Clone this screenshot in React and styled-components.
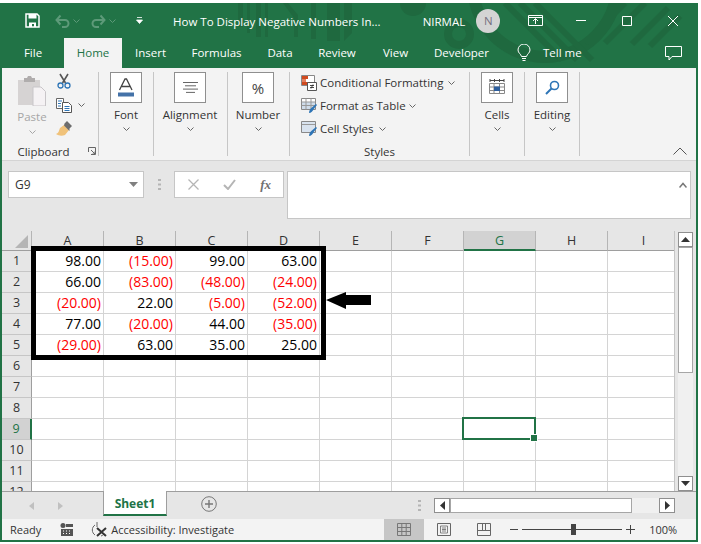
import React from 'react';
import styled, { createGlobalStyle } from 'styled-components';

const GREEN = '#217346';

const GlobalStyle = createGlobalStyle`
  html, body {
    margin: 0;
    padding: 0;
    background: #fff;
    overflow: hidden;
  }
  * { box-sizing: border-box; }
`;

const Page = styled.div`
  width: 701px;
  height: 544px;
  padding-top: 3px;
  background: #fff;
  font-family: "Open Sans", "Noto Sans", sans-serif;
  font-size: 12px;
  color: #333;
`;

const Window = styled.div`
  width: 698px;
  height: 539px;
  display: flex;
  flex-direction: column;
  border-left: 2px solid ${GREEN};
  border-right: 2px solid ${GREEN};
  border-bottom: 2px solid ${GREEN};
  background: #e6e6e6;
`;

const Header = styled.header`
  position: relative;
  height: 65px;
  flex: none;
  background: ${GREEN};
  color: #fff;
  overflow: hidden;
`;

const HeaderArt = styled.svg`
  position: absolute;
  left: -2px;
  top: -3px;
`;

const TitleBar = styled.div`
  position: relative;
  height: 35px;
  display: flex;
  align-items: center;
  padding-left: 23px;
`;

const Spot = styled.span`
  display: flex;
  align-items: center;
  flex: none;
  margin-left: ${p => p.$ml || 0}px;
`;

const DocTitle = styled.span`
  margin-left: ${p => p.$ml || 0}px;
  padding-top: 2px;
  font-size: 11.5px;
  white-space: nowrap;
`;

const Avatar = styled.span`
  width: 24px;
  height: 24px;
  margin-left: 11px;
  flex: none;
  border-radius: 50%;
  background: #d4d4d4;
  color: #77707f;
  font-size: 11.5px;
  display: flex;
  align-items: center;
  justify-content: center;
`;

const TabBar = styled.nav`
  position: relative;
  height: 30px;
  display: flex;
`;

const Tab = styled.span`
  width: ${p => p.$w}px;
  flex: none;
  text-align: center;
  padding-top: 7px;
  font-size: 11.5px;
  background: ${p => (p.$active ? '#f3f3f3' : 'transparent')};
  color: ${p => (p.$active ? GREEN : '#fff')};
`;

const TellMe = styled.span`
  font-size: 11.5px;
  margin-left: 12px;
  padding-top: 7px;
`;

const Ribbon = styled.section`
  height: 93px;
  flex: none;
  display: flex;
  padding-top: 4px;
  background: #f3f3f3;
  border-bottom: 1px solid #d4d4d4;
  position: relative;
`;

const Group = styled.div`
  width: ${p => p.$w}px;
  height: 84px;
  flex: none;
  display: flex;
  flex-direction: column;
  align-items: center;
  padding-right: ${p => p.$pr || 0}px;
  border-right: 1px solid #c6c6c6;
`;

const ClipboardRow = styled.div`
  width: 100%;
  display: flex;
  height: 66px;
  padding-left: 15px;
`;

const PasteColumn = styled.div`
  width: 30px;
  padding-top: 4px;
  display: flex;
  flex-direction: column;
  align-items: center;
  color: #a6a6a6;
  font-size: 11.5px;
  line-height: 15px;
`;

const PasteLabel = styled.span`
  margin-top: 3px;
`;

const ToolColumn = styled.div`
  margin-left: 9px;
  display: flex;
  flex-direction: column;
  gap: 8px;
  padding-top: 1px;
`;

const ToolRow = styled.div`
  display: flex;
  align-items: center;
  height: 16px;
  gap: 6px;
`;

const GroupLabel = styled.div`
  position: relative;
  width: 100%;
  margin-top: auto;
  margin-bottom: -3px;
  text-align: center;
  font-size: 11.5px;
  line-height: 15px;
  padding-right: ${p => p.$pr || 0}px;
`;

const Launcher = styled.svg`
  position: absolute;
  right: 2px;
  top: 3px;
`;

const ButtonBox = styled.div`
  width: 32px;
  height: 31px;
  flex: none;
  background: #fff;
  border: 1px solid #8f8f8f;
  display: flex;
  align-items: center;
  justify-content: center;
  color: #444;
  font-size: ${p => p.$size || 12}px;
`;

const BigLabel = styled.div`
  margin-top: 4px;
  font-size: 11.5px;
  line-height: 16px;
  white-space: nowrap;
`;

const Chevron = styled.svg`
  display: block;
  flex: none;
  margin-top: ${p => p.$mt || 0}px;
  margin-left: ${p => p.$ml || 0}px;
`;

const StyleList = styled.div`
  width: 100%;
  margin-top: -1px;
  padding-left: 11px;
`;

const StyleRow = styled.div`
  height: 23px;
  display: flex;
  align-items: center;
  gap: 3px;
  font-size: 11.5px;
  white-space: nowrap;
`;

const Collapse = styled.svg`
  position: absolute;
  right: 9px;
  bottom: 5px;
`;

const FormulaBar = styled.section`
  height: 70px;
  flex: none;
  display: flex;
  align-items: flex-start;
  padding: 10px 5px 0 6px;
  background: #e6e6e6;
`;

const NameBox = styled.div`
  width: 136px;
  height: 27px;
  flex: none;
  display: flex;
  align-items: center;
  justify-content: space-between;
  padding: 0 5px 0 6px;
  background: #fff;
  border: 1px solid #c6c6c6;
  font-size: 12px;
`;

const GripDots = styled.span`
  width: 30px;
  height: 27px;
  flex: none;
  display: flex;
  align-items: center;
  justify-content: center;
`;

const FunctionBox = styled.div`
  width: 110px;
  height: 27px;
  flex: none;
  display: flex;
  align-items: center;
  justify-content: space-between;
  padding: 0 12px 0 13px;
  background: #fff;
  border: 1px solid #c6c6c6;
`;

const FxMark = styled.span`
  font-family: "Liberation Serif", serif;
  font-style: italic;
  font-weight: 700;
  font-size: 13px;
  color: #707070;
`;

const FormulaInput = styled.div`
  position: relative;
  width: 404px;
  height: 48px;
  margin-left: 3px;
  flex: none;
  background: #fff;
  border: 1px solid #c6c6c6;
`;

const InputToggle = styled.svg`
  position: absolute;
  right: 3px;
  top: 10px;
`;

const SheetArea = styled.section`
  height: 260px;
  flex: none;
  display: flex;
  background: #e6e6e6;
`;

const GridFrame = styled.div`
  position: relative;
  width: 673px;
  height: 260px;
  flex: none;
  overflow: hidden;
  border-right: 1px solid #c6c6c6;
`;

const Grid = styled.div`
  display: grid;
  grid-template-columns: 30px repeat(9, 72px);
  grid-template-rows: 20px repeat(12, 21px);
  font-family: "Open Sans", sans-serif;
`;

const Corner = styled.div`
  background: #e6e6e6;
  border-bottom: 1px solid #9e9e9e;
  border-right: 1px solid #b5b5b5;
  position: relative;
`;

const CornerMark = styled.svg`
  position: absolute;
  right: 3px;
  bottom: 2px;
`;

const ColHead = styled.div`
  background: ${p => (p.$on ? '#d2d2d2' : '#e6e6e6')};
  border-right: 1px solid #b5b5b5;
  border-bottom: ${p => (p.$on ? `2px solid ${GREEN}` : '1px solid #9e9e9e')};
  color: ${p => (p.$on ? GREEN : '#333')};
  font-size: 12.5px;
  line-height: 19px;
  text-align: center;
`;

const RowHead = styled.div`
  background: ${p => (p.$on ? '#d2d2d2' : '#e6e6e6')};
  border-right: ${p => (p.$on ? `2px solid ${GREEN}` : '1px solid #9e9e9e')};
  border-bottom: 1px solid #c6c6c6;
  color: ${p => (p.$on ? GREEN : '#333')};
  font-size: 12.5px;
  line-height: 20px;
  text-align: center;
`;

const Cell = styled.div`
  position: relative;
  background: #fff;
  border-right: 1px solid #d4d4d4;
  border-bottom: 1px solid #d4d4d4;
  color: ${p => (p.$neg ? '#ff0000' : '#000')};
  font-size: 14px;
  line-height: 20px;
  text-align: right;
  padding-right: 2px;
  white-space: nowrap;
`;

const Selection = styled.div`
  position: absolute;
  left: -2px;
  top: -2px;
  width: 74px;
  height: 23px;
  border: 2px solid ${GREEN};
  z-index: 1;

  &::after {
    content: '';
    position: absolute;
    right: -4px;
    bottom: -4px;
    width: 6px;
    height: 6px;
    background: ${GREEN};
    border: 1px solid #fff;
  }
`;

const Callout = styled.div`
  position: absolute;
  left: 29px;
  top: 15px;
  width: 295px;
  height: 114px;
  border: 5px solid #000;
  pointer-events: none;
`;

const CalloutArrow = styled.svg`
  position: absolute;
  left: 324px;
  top: 61px;
`;

const VScroll = styled.div`
  width: 17px;
  margin-left: 3px;
  flex: none;
  display: flex;
  flex-direction: column;
  padding-top: 1px;
`;

const ScrollButton = styled.div`
  width: ${p => (p.$h ? 16 : 15)}px;
  height: 15px;
  flex: none;
  background: #fff;
  border: 1px solid #8f8f8f;
  display: flex;
  align-items: center;
  justify-content: center;
`;

const VThumb = styled.div`
  width: 15px;
  height: 126px;
  flex: none;
  background: #fff;
  border: 1px solid #a6a6a6;
`;

const VTrack = styled.div`
  width: 15px;
  flex: 1;
  background: #f0f0f0;
`;

const SheetTabs = styled.section`
  height: 28px;
  flex: none;
  display: flex;
  align-items: flex-start;
  background: #e6e6e6;
  border-top: 1px solid #9e9e9e;
`;

const NavArrows = styled.div`
  width: 101px;
  height: 27px;
  flex: none;
  display: flex;
  align-items: center;
  gap: 24px;
  padding-left: 27px;
`;

const SheetTab = styled.div`
  width: 64px;
  height: 25px;
  flex: none;
  margin-top: -1px;
  background: #fff;
  border-left: 1px solid #9e9e9e;
  border-right: 1px solid #9e9e9e;
  border-bottom: 2px solid ${GREEN};
  color: ${GREEN};
  font-weight: 700;
  font-size: 12px;
  line-height: 25px;
  text-align: center;
`;

const AddSheet = styled.svg`
  margin: 4px 0 0 34px;
  flex: none;
`;

const TabGrip = styled(Spot)`
  height: 27px;
`;

const HScroll = styled.div`
  display: flex;
  margin: 6px 0 0 13px;
`;

const HThumb = styled.div`
  width: 182px;
  height: 15px;
  background: #fff;
  border: 1px solid #a6a6a6;
`;

const HTrack = styled.div`
  width: 27px;
  height: 15px;
  background: #f0f0f0;
`;

const StatusBar = styled.footer`
  flex: 1;
  display: flex;
  align-items: center;
  background: #f3f3f3;
  font-size: 11px;
`;

const StatusText = styled.span`
  margin-left: ${p => p.$ml || 0}px;
  white-space: nowrap;
  font-size: ${p => p.$size || 11}px;
`;

const ViewButton = styled.span`
  width: 40px;
  height: 100%;
  flex: none;
  display: flex;
  align-items: center;
  justify-content: center;
  margin-left: ${p => p.$ml || 0}px;
  background: ${p => (p.$on ? '#c6c6c6' : 'transparent')};
`;

const ZoomTrack = styled.span`
  position: relative;
  width: 100px;
  height: 1px;
  flex: none;
  margin: 0 4px;
  background: #444;
`;

const ZoomKnob = styled.span`
  position: absolute;
  left: 49px;
  top: -5px;
  width: 5px;
  height: 11px;
  background: #444;
`;

const SmallChevron = ({ mt, ml, color = '#666' }) => (
  <Chevron width="7" height="4" viewBox="0 0 7 4" $mt={mt} $ml={ml}>
    <path d="M.5.5 3.5 3.5 6.5.5" fill="none" stroke={color} />
  </Chevron>
);

const SaveIcon = () => (
  <svg width="15" height="15" viewBox="0 0 15 15">
    <path d="M1 1h11l2 2v11H1z" fill="none" stroke="#fff" strokeWidth="1.5" />
    <path d="M3.5 1h8v4.5h-8z" fill="#fff" />
    <path d="M4 9.5h7V14H9V11H7v3H4z" fill="#fff" />
  </svg>
);

const UndoIcon = ({ flip }) => (
  <svg width="15" height="14" viewBox="0 0 15 14" style={flip ? { transform: 'scaleX(-1)' } : undefined}>
    <path d="M2 6h8a3.5 3.5 0 0 1 0 7H7M5.500 1.500 1.500 6l4 4.500" fill="none" stroke="#5d9a79" strokeWidth="2" />
  </svg>
);

const HeaderDecoration = () => (
  <HeaderArt width="698" height="68" viewBox="0 0 698 68">
    <g fill="#1f693f">
      <rect x="238" y="3" width="5" height="24" />
      <rect x="247" y="3" width="3" height="30" />
      <rect x="256" y="3" width="5" height="34" />
      <rect x="265" y="3" width="3" height="34" />
      <path d="M283 3h5l10 12v22h-4V18z" />
      <rect x="311" y="3" width="5" height="36" />
      <rect x="327" y="3" width="13" height="38" />
      <path d="M344 3h8v30l-8 8z" />
      <circle cx="413" cy="3" r="13" />
    </g>
    <g fill="none" stroke="#1f693f">
      <circle cx="459" cy="34" r="11" strokeWidth="8" />
      <circle cx="545" cy="-15" r="72" strokeWidth="12" />
      <path d="M505 3 562 60M520 3 577 60M535 3 592 60" strokeWidth="6" />
      <path d="M625 3 585 43M645 3 605 43M668 8 632 44M680 16 650 46" strokeWidth="6" />
    </g>
  </HeaderArt>
);

const PasteIcon = () => (
  <svg width="28" height="30" viewBox="0 0 28 30">
    <path d="M0 4h22v25H0z" fill="#d6d3d3" />
    <path d="M6 4V2h3l1-2h3l1 2h3v4H6z" fill="#b0adad" />
    <path d="M15 11h8l4.500 4.500V30H15z" fill="#f5f2f4" stroke="#c8c5c8" />
  </svg>
);

const ScissorsIcon = () => (
  <svg width="16" height="16" viewBox="0 0 16 16">
    <path d="M4 1l5.500 9M12 1 6.500 10" fill="none" stroke="#555" strokeWidth="1.600" />
    <circle cx="4.500" cy="12.500" r="2.500" fill="none" stroke="#2e75b6" strokeWidth="1.300" />
    <circle cx="11.500" cy="12.500" r="2.500" fill="none" stroke="#2e75b6" strokeWidth="1.300" />
  </svg>
);

const CopyIcon = () => (
  <svg width="16" height="15" viewBox="0 0 16 15">
    <path d="M.5.500h7v10h-7z" fill="#fff" stroke="#666" />
    <path d="M6.500 4.500h6l3 3v7h-9z" fill="#fff" stroke="#555" />
    <path d="M2 3h4M2 5.500h3M2 8h3M8.500 8.500h5M8.500 10.500h5M8.500 12.500h5" stroke="#2e75b6" />
  </svg>
);

const BrushIcon = () => (
  <svg width="17" height="16" viewBox="0 0 17 16">
    <path d="M8 4 13 9 9 14C6 15 3 15 0 13c3-1 3-4 4-6z" fill="#f0c27a" />
    <path d="M8.500 2.500 11 0l5 5-2.500 2.500V10L8 4.500z" fill="#6d6d6d" />
  </svg>
);

const FontIcon = () => (
  <svg width="18" height="20" viewBox="0 0 18 20">
    <path d="M2.500 12 8 1h1.500L15 12M4.800 8.500h8" fill="none" stroke="#444" strokeWidth="1.300" />
    <rect x="1" y="14.500" width="16" height="4" fill="#4472a8" />
  </svg>
);

const AlignIcon = () => (
  <svg width="15" height="11" viewBox="0 0 15 11">
    <path d="M0 .5h15M2 3.800h11M0 7.100h15M3 10.400h9" stroke="#666" />
  </svg>
);

const CondIcon = () => (
  <svg width="16" height="16" viewBox="0 0 16 16">
    <path d="M.5.500h13v10H.500z" fill="#fff" stroke="#888" />
    <path d="M1 1h6v3H1z" fill="#d04a1f" />
    <path d="M1 4h4v3H1z" fill="#e28060" />
    <path d="M1 7h6v3H1z" fill="#d04a1f" />
    <path d="M6.500 7.500h9v8h-9z" fill="#fff" stroke="#555" />
    <path d="M9 10.500h4M9 12.500h4M12 9.500l-2 4" stroke="#333" strokeWidth=".9" />
  </svg>
);

const TableIcon = ({ plain }) => (
  <svg width="16" height="16" viewBox="0 0 16 16">
    <path d="M.5.500h14v11H.500z" fill={plain ? '#d9e3ef' : '#fff'} stroke="#888" />
    {!plain && <path d="M1 4h13v7H1z" fill="#cfdcea" />}
    <path d={plain ? 'M1 3.500h13' : 'M5 .5v11M10 .5v11M.5 4h14M.5 7.500h14'} stroke="#999" />
    <path d="M8 15c0-3 2-5 3.500-6L15 6l1 1-3 3.500C12 13 10 15 8 15z" fill="#2e75b6" />
  </svg>
);

const CellsIcon = () => (
  <svg width="16" height="17" viewBox="0 0 16 17">
    <path d="M1 1.500h14M1 0v3M5.500 0v3M10.500 0v3M15 0v3" stroke="#444" />
    <path d="M.5 4.500h15v10H.500zM.5 8h15M.5 11.500h15M5 4.500v10M10.500 4.500v10" fill="#fff" stroke="#888" />
    <rect x="5" y="7.500" width="6" height="4.500" fill="#2e5f9e" />
  </svg>
);

const SearchIcon = () => (
  <svg width="15" height="15" viewBox="0 0 15 15">
    <circle cx="9.500" cy="5.500" r="4" fill="none" stroke="#2e75b6" strokeWidth="1.600" />
    <path d="M6.500 8.500 1 14" stroke="#2e75b6" strokeWidth="2" />
  </svg>
);

const columns = ['A', 'B', 'C', 'D', 'E', 'F', 'G', 'H', 'I'];

const rows = [
  ['98.00', '(15.00)', '99.00', '63.00'],
  ['66.00', '(83.00)', '(48.00)', '(24.00)'],
  ['(20.00)', '22.00', '(5.00)', '(52.00)'],
  ['77.00', '(20.00)', '44.00', '(35.00)'],
  ['(29.00)', '63.00', '35.00', '25.00'],
];

const Sheet = () => (
  <Grid>
    <Corner>
      <CornerMark width="13" height="13" viewBox="0 0 13 13">
        <path d="M13 0v13H0z" fill="#b5b5b5" />
      </CornerMark>
    </Corner>
    {columns.map(c => (
      <ColHead key={c} $on={c === 'G'}>{c}</ColHead>
    ))}
    {Array.from({ length: 12 }, (_, r) => (
      <React.Fragment key={r}>
        <RowHead $on={r === 8}>{r + 1}</RowHead>
        {columns.map((c, i) => {
          const value = rows[r] ? rows[r][i] : undefined;
          return (
            <Cell key={c} $neg={value && value.startsWith('(')}>
              {value}
              {r === 8 && c === 'G' && <Selection />}
            </Cell>
          );
        })}
      </React.Fragment>
    ))}
  </Grid>
);

export default function App() {
  return (
    <Page>
      <GlobalStyle />
      <Window>
        <Header>
          <HeaderDecoration />
          <TitleBar>
            <SaveIcon />
            <Spot $ml={15}><UndoIcon /></Spot>
            <Spot $ml={3}><SmallChevron color="#5d9a79" /></Spot>
            <Spot $ml={11}><UndoIcon flip /></Spot>
            <Spot $ml={3}><SmallChevron color="#5d9a79" /></Spot>
            <Spot $ml={20}>
              <svg width="7" height="7" viewBox="0 0 7 7">
                <path d="M1 .5h5M.5 3 3.500 6.500 6.500 3z" fill="#fff" stroke="#fff" strokeWidth=".8" />
              </svg>
            </Spot>
            <DocTitle $ml={30}>How To Display Negative Numbers In...</DocTitle>
            <DocTitle $ml={42}>NIRMAL</DocTitle>
            <Avatar>N</Avatar>
            <Spot $ml={28}>
              <svg width="15" height="11" viewBox="0 0 15 11">
                <path d="M.5.500h14v10H.500zM.5 2.500h14M7.500 9V4M5 6l2.500-2.500L10 6" fill="none" stroke="#fff" />
              </svg>
            </Spot>
            <Spot $ml={33}>
              <svg width="10" height="1" viewBox="0 0 10 1"><path d="M0 .5h10" stroke="#fff" /></svg>
            </Spot>
            <Spot $ml={36}>
              <svg width="10" height="10" viewBox="0 0 10 10"><path d="M.5.500h9v9h-9z" fill="none" stroke="#fff" /></svg>
            </Spot>
            <Spot $ml={36}>
              <svg width="10" height="10" viewBox="0 0 10 10"><path d="M0 0l10 10M10 0 0 10" stroke="#fff" /></svg>
            </Spot>
          </TitleBar>
          <TabBar>
            <Tab $w={62}>File</Tab>
            <Tab $w={58} $active>Home</Tab>
            <Tab $w={57}>Insert</Tab>
            <Tab $w={75}>Formulas</Tab>
            <Tab $w={52}>Data</Tab>
            <Tab $w={62}>Review</Tab>
            <Tab $w={55}>View</Tab>
            <Tab $w={77}>Developer</Tab>
            <Spot $ml={17}>
              <svg width="14" height="18" viewBox="0 0 14 18">
                <path d="M4.500 12.500C4 10 1 9 1 6a6 6 0 0 1 12 0c0 3-3 4-3.500 6.500zM5 14.500h4M5.500 16.500h3" fill="none" stroke="#fff" />
              </svg>
            </Spot>
            <TellMe>Tell me</TellMe>
            <Spot $ml={83}>
              <svg width="17" height="15" viewBox="0 0 17 15">
                <path d="M.5.500h16v10H7L4 14v-3.500H.500z" fill="none" stroke="#fff" />
              </svg>
            </Spot>
          </TabBar>
        </Header>

        <Ribbon>
          <Group $w={97}>
            <ClipboardRow>
              <PasteColumn>
                <PasteIcon />
                <PasteLabel>Paste</PasteLabel>
                <SmallChevron mt={6} color="#a6a6a6" />
              </PasteColumn>
              <ToolColumn>
                <ToolRow><ScissorsIcon /></ToolRow>
                <ToolRow><CopyIcon /><SmallChevron /></ToolRow>
                <ToolRow><BrushIcon /></ToolRow>
              </ToolColumn>
            </ClipboardRow>
            <GroupLabel $pr={13}>
              Clipboard
              <Launcher width="8" height="8" viewBox="0 0 8 8">
                <path d="M.5 5V.5H7.500v7H3M3 3l4 4M4.500 7H7V4.500" fill="none" stroke="#666" />
              </Launcher>
            </GroupLabel>
          </Group>
          <Group $w={55}>
            <ButtonBox><FontIcon /></ButtonBox>
            <BigLabel>Font</BigLabel>
            <SmallChevron mt={4} />
          </Group>
          <Group $w={74} $pr={1}>
            <ButtonBox><AlignIcon /></ButtonBox>
            <BigLabel>Alignment</BigLabel>
            <SmallChevron mt={4} />
          </Group>
          <Group $w={62} $pr={1}>
            <ButtonBox $size={15}>%</ButtonBox>
            <BigLabel>Number</BigLabel>
            <SmallChevron mt={4} />
          </Group>
          <Group $w={180}>
            <StyleList>
              <StyleRow><CondIcon />Conditional Formatting<SmallChevron ml={2} /></StyleRow>
              <StyleRow><TableIcon />Format as Table<SmallChevron /></StyleRow>
              <StyleRow><TableIcon plain />Cell Styles<SmallChevron ml={2} /></StyleRow>
            </StyleList>
            <GroupLabel>Styles</GroupLabel>
          </Group>
          <Group $w={55}>
            <ButtonBox><CellsIcon /></ButtonBox>
            <BigLabel>Cells</BigLabel>
            <SmallChevron mt={4} />
          </Group>
          <Group $w={55}>
            <ButtonBox><SearchIcon /></ButtonBox>
            <BigLabel>Editing</BigLabel>
            <SmallChevron mt={4} />
          </Group>
          <Collapse width="14" height="8" viewBox="0 0 14 8">
            <path d="M.5 7.500 7 1l6.500 6.500" fill="none" stroke="#555" />
          </Collapse>
        </Ribbon>

        <FormulaBar>
          <NameBox>
            G9
            <svg width="9" height="5" viewBox="0 0 9 5"><path d="M0 0h9L4.500 5z" fill="#808080" /></svg>
          </NameBox>
          <GripDots>
            <svg width="3" height="11" viewBox="0 0 3 11">
              <path d="M0 0h3v2H0zM0 4.500h3v2H0zM0 9h3v2H0z" fill="#b5b5b5" />
            </svg>
          </GripDots>
          <FunctionBox>
            <svg width="11" height="11" viewBox="0 0 11 11"><path d="M.5.500l10 10M10.500.500l-10 10" stroke="#b5b5b5" strokeWidth="1.300" /></svg>
            <svg width="13" height="11" viewBox="0 0 13 11"><path d="M1 6l4 4 7-9" fill="none" stroke="#b5b5b5" strokeWidth="2" /></svg>
            <FxMark>fx</FxMark>
          </FunctionBox>
          <FormulaInput>
            <InputToggle width="8" height="6" viewBox="0 0 8 6">
              <path d="M.5 5.500 4 1.500l3.500 4" fill="none" stroke="#777" strokeWidth="1.500" />
            </InputToggle>
          </FormulaInput>
        </FormulaBar>

        <SheetArea>
          <GridFrame>
            <Sheet />
            <Callout />
            <CalloutArrow width="46" height="17" viewBox="0 0 46 17">
              <path d="M0 8 20 0v3h25v10H20v4z" fill="#000" />
            </CalloutArrow>
          </GridFrame>
          <VScroll>
            <ScrollButton>
              <svg width="9" height="5" viewBox="0 0 9 5"><path d="M4.500 0 9 5H0z" fill="#333" /></svg>
            </ScrollButton>
            <VThumb />
            <VTrack />
            <ScrollButton>
              <svg width="9" height="5" viewBox="0 0 9 5"><path d="M4.500 5 9 0H0z" fill="#333" /></svg>
            </ScrollButton>
          </VScroll>
        </SheetArea>

        <SheetTabs>
          <NavArrows>
            <svg width="5" height="8" viewBox="0 0 5 8"><path d="M5 0v8L0 4z" fill="#c0c0c0" /></svg>
            <svg width="5" height="8" viewBox="0 0 5 8"><path d="M0 0v8l5-4z" fill="#c0c0c0" /></svg>
          </NavArrows>
          <SheetTab>Sheet1</SheetTab>
          <AddSheet width="16" height="16" viewBox="0 0 16 16">
            <circle cx="8" cy="8" r="7.300" fill="none" stroke="#777" />
            <path d="M8 4v8M4 8h8" stroke="#777" strokeWidth="1.400" />
          </AddSheet>
          <TabGrip $ml={201}>
            <svg width="3" height="11" viewBox="0 0 3 11">
              <path d="M0 0h3v2H0zM0 4.500h3v2H0zM0 9h3v2H0z" fill="#b5b5b5" />
            </svg>
          </TabGrip>
          <HScroll>
            <ScrollButton $h>
              <svg width="5" height="9" viewBox="0 0 5 9"><path d="M5 0v9L0 4.500z" fill="#333" /></svg>
            </ScrollButton>
            <HThumb />
            <HTrack />
            <ScrollButton $h>
              <svg width="5" height="9" viewBox="0 0 5 9"><path d="M0 0v9l5-4.500z" fill="#333" /></svg>
            </ScrollButton>
          </HScroll>
        </SheetTabs>

        <StatusBar>
          <StatusText $ml={8}>Ready</StatusText>
          <Spot $ml={19}>
            <svg width="13" height="13" viewBox="0 0 13 13">
              <circle cx="3" cy="2.500" r="2.500" fill="#555" />
              <path d="M6 1h7v3H6zM1 6h12v7H1z" fill="#555" />
              <path d="M3 8h1M6 8h1M9 8h1M3 10.500h1M6 10.500h1M9 10.500h1" stroke="#fff" />
            </svg>
          </Spot>
          <Spot $ml={17}>
            <svg width="17" height="15" viewBox="0 0 17 15">
              <path d="M5 3a6 6 0 0 0 0 10M7 0v5M11 14a5 5 0 0 0 3-2" fill="none" stroke="#666" />
              <path d="M7 6l9 8M16 6l-9 8" stroke="#333" strokeWidth="2" />
            </svg>
          </Spot>
          <StatusText $ml={4}>Accessibility: Investigate</StatusText>
          <ViewButton $ml={150} $on>
            <svg width="14" height="13" viewBox="0 0 14 13">
              <path d="M.5.500h13v12H.500zM.5 4.500h13M.5 8.500h13M4.800.5v12M9.200.5v12" fill="none" stroke="#777" />
            </svg>
          </ViewButton>
          <ViewButton>
            <svg width="14" height="13" viewBox="0 0 14 13">
              <path d="M.5.500h13v12H.500z" fill="none" stroke="#666" />
              <path d="M3.500 3h7v7h-7zM5 5h4M5 6.500h4M5 8h4" fill="none" stroke="#666" strokeWidth=".8" />
            </svg>
          </ViewButton>
          <ViewButton>
            <svg width="14" height="13" viewBox="0 0 14 13">
              <path d="M.5.500h13v12H.500zM.5 7.500h13M5.500.5v7M8.500.5v7" fill="none" stroke="#666" />
            </svg>
          </ViewButton>
          <Spot $ml={6}>
            <svg width="8" height="1" viewBox="0 0 8 1"><path d="M0 .5h8" stroke="#444" /></svg>
          </Spot>
          <ZoomTrack><ZoomKnob /></ZoomTrack>
          <Spot>
            <svg width="9" height="9" viewBox="0 0 9 9"><path d="M0 4.500h9M4.500 0v9" stroke="#444" /></svg>
          </Spot>
          <StatusText $ml={14}>100%</StatusText>
        </StatusBar>
      </Window>
    </Page>
  );
}
